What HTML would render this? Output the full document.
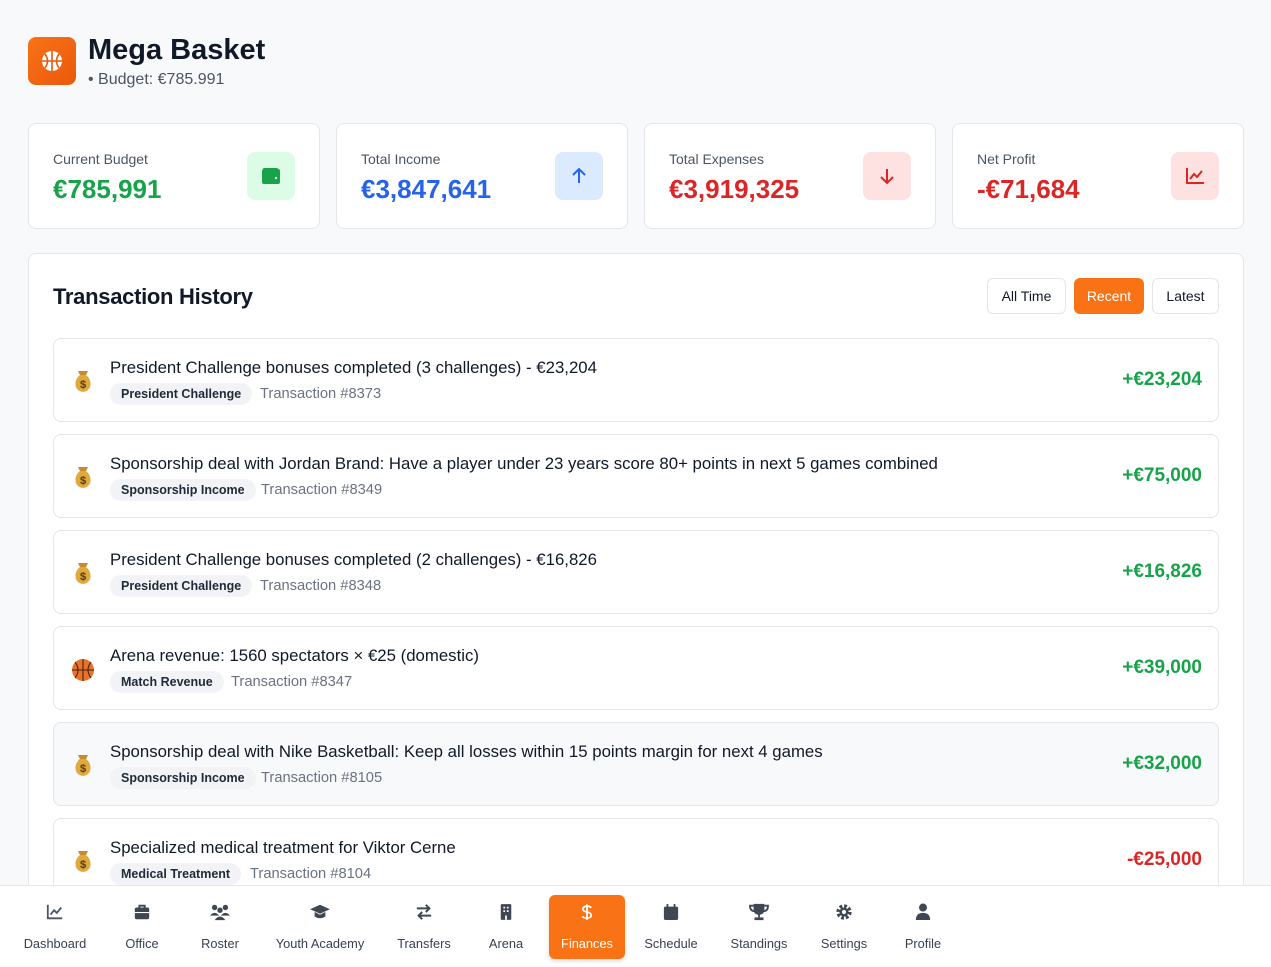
<!DOCTYPE html>
<html><head><meta charset="utf-8"><style>
*{box-sizing:border-box;margin:0;padding:0}
html,body{width:1271px;height:967px;overflow:hidden}
body{background:#f8f9fb;font-family:"Liberation Sans",Arial,sans-serif;color:#111827;position:relative}
.abs{position:absolute}
.logo{left:28px;top:37px;width:48px;height:48px;border-radius:8px;background:linear-gradient(135deg,#f97316,#ea580c);display:flex;align-items:center;justify-content:center}
.card{top:123px;width:292px;height:106px;background:#fff;border:1px solid #e2e5ea;border-radius:8px}
.card .lbl{position:absolute;left:24px;top:27px;font-size:14px;color:#4b5563}
.card .val{position:absolute;left:24px;top:50px;font-size:26px;font-weight:bold}
.card .ic{position:absolute;right:24px;top:28px;width:48px;height:48px;border-radius:8px;display:flex;align-items:center;justify-content:center}
.panel{left:28px;top:253px;width:1216px;height:714px;background:#fff;border:1px solid #e2e5ea;border-bottom:none;border-radius:8px 8px 0 0}
.btn{top:278px;height:36px;border:1px solid #e2e5ea;border-radius:6px;font-size:14px;display:flex;align-items:center;justify-content:center;background:#fff;color:#111827}
.row{left:53px;width:1166px;height:84px;background:#fff;border:1px solid #e2e5ea;border-radius:8px}
.row .em{position:absolute;left:18px;top:30px;width:22px;height:24px}
.row .t{position:absolute;left:56px;top:19px;font-size:16.8px;color:#111827}
.row .tag{position:absolute;left:56px;top:44px;height:22px;padding:0 11px;border-radius:11px;background:#f1f3f6;font-size:12.5px;font-weight:bold;line-height:22px;color:#1f2937}
.row .tx{position:absolute;top:47px;font-size:14.7px;color:#6b7280}
.row .amt{position:absolute;right:16px;top:30px;font-size:19px;font-weight:bold;color:#16a34a}
.nav{left:0;top:885px;width:1271px;height:82px;background:#fff;border-top:1px solid #e5e7eb}
.ni{position:absolute;top:9px;height:64px;display:flex;flex-direction:column;align-items:center;font-size:12.8px;color:#374151}
.ni svg{margin-top:8px;margin-bottom:15px}
.ni.act{background:#f97316;color:#fff;border-radius:6px;box-shadow:0 2px 4px rgba(0,0,0,.15)}
</style></head><body>
<div class="abs logo"><svg width="22" height="22" viewBox="0 0 22 22"><circle cx="11" cy="11" r="10" fill="#fff"/><path d="M1 11h20M11 1v20M4 4q5 7 0 14M18 4q-5 7 0 14" stroke="#ea580c" stroke-width="1.6" fill="none"/></svg></div>
<div class="abs" style="left:88px;top:34px;font-size:29px;font-weight:bold;color:#111827">Mega Basket</div>
<div class="abs" style="left:88px;top:71px;font-size:16px;color:#4b5563">• Budget: €785.991</div>

<div class="abs card" style="left:28px"><div class="lbl">Current Budget</div><div class="val" style="color:#16a34a">€785,991</div><div class="ic" style="background:#dcfce7"><svg width="20" height="18" viewBox="0 0 20 18"><rect x="1" y="2" width="18" height="15" rx="2" fill="#16a34a"/><rect x="2" y="1" width="15" height="3" rx="1" fill="#16a34a"/><circle cx="15" cy="11" r="1.2" fill="#dcfce7"/></svg></div></div>
<div class="abs card" style="left:336px"><div class="lbl">Total Income</div><div class="val" style="color:#2563eb">€3,847,641</div><div class="ic" style="background:#dbeafe"><svg width="18" height="18" viewBox="0 0 18 18"><path d="M9 16V2M3 8l6-6 6 6" stroke="#2563eb" stroke-width="2" fill="none"/></svg></div></div>
<div class="abs card" style="left:644px"><div class="lbl">Total Expenses</div><div class="val" style="color:#dc2626">€3,919,325</div><div class="ic" style="background:#fee2e2"><svg width="18" height="18" viewBox="0 0 18 18"><path d="M9 2v14M3 10l6 6 6-6" stroke="#dc2626" stroke-width="2" fill="none"/></svg></div></div>
<div class="abs card" style="left:952px"><div class="lbl">Net Profit</div><div class="val" style="color:#dc2626">-€71,684</div><div class="ic" style="background:#fee2e2"><svg width="20" height="18" viewBox="0 0 20 18"><path d="M2 1v15h17M5 12l4-5 3 3 5-6" stroke="#dc2626" stroke-width="2" fill="none"/></svg></div></div>

<div class="abs panel"></div>
<div class="abs" style="left:53px;top:284px;font-size:22px;font-weight:bold;letter-spacing:-.3px">Transaction History</div>
<div class="abs btn" style="left:987px;width:79px">All Time</div>
<div class="abs btn" style="left:1074px;width:70px;background:#f97316;border-color:#f97316;color:#fff">Recent</div>
<div class="abs btn" style="left:1152px;width:67px">Latest</div>

<svg width="0" height="0" style="position:absolute"><defs><g id="bag"><path d="M8 6l-2-4h10l-2 4z" fill="#c98a2b"/><path d="M8 6C2 10 1 22 11 23 21 22 20 10 14 6z" fill="#e0a93e"/><text x="11" y="19" font-size="11" font-weight="bold" text-anchor="middle" fill="#5a3a10" font-family="Liberation Sans">$</text></g></defs></svg>

<div class="abs row" style="top:338px"><svg class="em" viewBox="0 0 22 24"><use href="#bag"/></svg><div class="t">President Challenge bonuses completed (3 challenges) - €23,204</div><div class="tag">President Challenge</div><div class="tx" style="left:206px">Transaction #8373</div><div class="amt">+€23,204</div></div>
<div class="abs row" style="top:434px"><svg class="em" viewBox="0 0 22 24"><use href="#bag"/></svg><div class="t">Sponsorship deal with Jordan Brand: Have a player under 23 years score 80+ points in next 5 games combined</div><div class="tag">Sponsorship Income</div><div class="tx" style="left:207px">Transaction #8349</div><div class="amt">+€75,000</div></div>
<div class="abs row" style="top:530px"><svg class="em" viewBox="0 0 22 24"><use href="#bag"/></svg><div class="t">President Challenge bonuses completed (2 challenges) - €16,826</div><div class="tag">President Challenge</div><div class="tx" style="left:206px">Transaction #8348</div><div class="amt">+€16,826</div></div>
<div class="abs row" style="top:626px"><svg class="em" viewBox="0 0 24 24" style="width:24px;left:17px"><circle cx="12" cy="13" r="11" fill="#e8722a"/><path d="M1 13h22M12 2v22M4 5q6 8 0 16M20 5q-6 8 0 16" stroke="#4a2410" stroke-width="1.1" fill="none"/></svg><div class="t">Arena revenue: 1560 spectators × €25 (domestic)</div><div class="tag">Match Revenue</div><div class="tx" style="left:177px">Transaction #8347</div><div class="amt">+€39,000</div></div>
<div class="abs row" style="top:722px;background:#f8f9fb"><svg class="em" viewBox="0 0 22 24"><use href="#bag"/></svg><div class="t">Sponsorship deal with Nike Basketball: Keep all losses within 15 points margin for next 4 games</div><div class="tag">Sponsorship Income</div><div class="tx" style="left:207px">Transaction #8105</div><div class="amt">+€32,000</div></div>
<div class="abs row" style="top:818px"><svg class="em" viewBox="0 0 22 24"><use href="#bag"/></svg><div class="t">Specialized medical treatment for Viktor Cerne</div><div class="tag">Medical Treatment</div><div class="tx" style="left:196px">Transaction #8104</div><div class="amt" style="color:#dc2626">-€25,000</div></div>

<div class="abs nav">
<div class="ni" style="left:16px;width:78px"><svg width="18" height="18" viewBox="0 0 20 20"><path d="M2 2v15h16M5 13l4-5 3 3 5-6" stroke="#4b5563" stroke-width="2" fill="none"/></svg>Dashboard</div>
<div class="ni" style="left:116px;width:52px"><svg width="18" height="18" viewBox="0 0 20 20"><rect x="2" y="5" width="16" height="13" rx="2" fill="#3f4654"/><path d="M7 5V3h6v2" stroke="#3f4654" stroke-width="2" fill="none"/><rect x="2" y="10" width="16" height="1.2" fill="#fff"/></svg>Office</div>
<div class="ni" style="left:194px;width:52px"><svg width="22" height="18" viewBox="0 0 24 20"><circle cx="6" cy="5" r="3" fill="#3f4654"/><circle cx="18" cy="5" r="3" fill="#3f4654"/><circle cx="12" cy="8" r="3" fill="#3f4654"/><path d="M1 14q5-6 10 0zM13 14q5-6 10 0zM6 19q6-8 12 0z" fill="#3f4654"/></svg>Roster</div>
<div class="ni" style="left:270px;width:100px"><svg width="22" height="18" viewBox="0 0 24 20"><path d="M1 7l11-5 11 5-11 5z" fill="#3f4654"/><path d="M6 10v5q6 4 12 0v-5l-6 3z" fill="#3f4654"/></svg>Youth Academy</div>
<div class="ni" style="left:392px;width:64px"><svg width="18" height="18" viewBox="0 0 20 20"><path d="M2 6h14M12 2l4 4-4 4M18 14H4M8 10l-4 4 4 4" stroke="#3f4654" stroke-width="2.2" fill="none"/></svg>Transfers</div>
<div class="ni" style="left:484px;width:44px"><svg width="14" height="18" viewBox="0 0 16 20"><rect x="2" y="1" width="12" height="18" rx="1" fill="#3f4654"/><g fill="#fff"><rect x="5" y="4" width="2" height="2"/><rect x="9" y="4" width="2" height="2"/><rect x="5" y="8" width="2" height="2"/><rect x="9" y="8" width="2" height="2"/><rect x="7" y="14" width="2" height="5"/></g></svg>Arena</div>
<div class="ni act" style="left:549px;width:76px"><svg width="12" height="18" viewBox="0 0 14 20"><path d="M12 5Q10 3 7 3T2 6q0 3 5 4t5 4-5 3-5-2M7 1v18" stroke="#fff" stroke-width="2" fill="none"/></svg>Finances</div>
<div class="ni" style="left:640px;width:62px"><svg width="16" height="18" viewBox="0 0 18 20"><rect x="1" y="4" width="16" height="15" rx="2" fill="#3f4654"/><rect x="4" y="1" width="2" height="5" fill="#3f4654"/><rect x="12" y="1" width="2" height="5" fill="#3f4654"/></svg>Schedule</div>
<div class="ni" style="left:726px;width:66px"><svg width="20" height="18" viewBox="0 0 22 20"><path d="M5 1h12v6q0 6-6 6T5 7z" fill="#3f4654"/><path d="M5 3H1q0 6 5 6M17 3h4q0 6-5 6" stroke="#3f4654" stroke-width="2" fill="none"/><rect x="10" y="12" width="2" height="4" fill="#3f4654"/><rect x="6" y="16" width="10" height="3" fill="#3f4654"/></svg>Standings</div>
<div class="ni" style="left:816px;width:56px"><svg width="18" height="18" viewBox="0 0 20 20"><circle cx="10" cy="10" r="6.5" fill="none" stroke="#3f4654" stroke-width="4" stroke-dasharray="3 2.1"/><circle cx="10" cy="10" r="5" fill="#3f4654"/><circle cx="10" cy="10" r="2.3" fill="#fff"/></svg>Settings</div>
<div class="ni" style="left:900px;width:46px"><svg width="16" height="18" viewBox="0 0 18 20"><circle cx="9" cy="5" r="4.5" fill="#3f4654"/><path d="M1 19q0-8 8-8t8 8z" fill="#3f4654"/></svg>Profile</div>
</div>
</body></html>
